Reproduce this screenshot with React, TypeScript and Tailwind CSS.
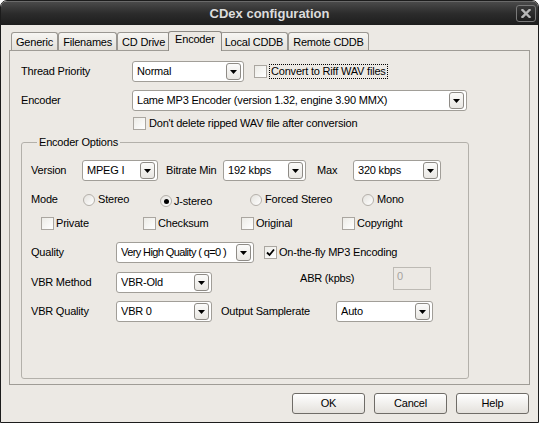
import React from 'react';

const font = { fontFamily: '"Liberation Sans", Arial, sans-serif' };

function Arrow() {
  return (
    <span className="w-[15px] h-[17px] mr-[2px] shrink-0 rounded-[3px] border border-[#8e8b86] bg-gradient-to-b from-[#fbfbfa] to-[#e9e7e3] flex items-center justify-center">
      <svg width="7" height="4" viewBox="0 0 7 4">
        <path d="M0 0h7L3.5 4z" fill="#000" />
      </svg>
    </span>
  );
}

function Select({ w, value, tight = false }: { w: string; value: string; tight?: boolean }) {
  return (
    <div className={`${w} h-[21px] shrink-0 rounded-[3px] border border-[#a19e98] bg-white flex items-center pl-[4px]`}>
      <span className={`flex-1 overflow-hidden whitespace-nowrap ${tight ? 'tracking-[-0.6px]' : ''}`}>{value}</span>
      <Arrow />
    </div>
  );
}

function Check({ checked = false }: { checked?: boolean }) {
  return (
    <span className="w-[13px] h-[13px] shrink-0 border border-[#aaa6a0] bg-gradient-to-br from-[#ecebe6] to-white flex items-center justify-center">
      {checked && (
        <svg width="9" height="9" viewBox="0 0 9 9">
          <path d="M1 4.5l2.5 2.5L8 1.5" stroke="#000" strokeWidth="1.8" fill="none" />
        </svg>
      )}
    </span>
  );
}

function Radio({ checked = false }: { checked?: boolean }) {
  return (
    <span className="w-[12px] h-[12px] shrink-0 rounded-full border border-[#b4b0aa] bg-gradient-to-br from-[#e4e2dd] to-white flex items-center justify-center">
      {checked && <span className="w-[5px] h-[5px] rounded-full bg-black" />}
    </span>
  );
}

function Tab({ label, active = false }: { label: string; active?: boolean }) {
  if (active) {
    return (
      <div className="relative z-10 -mx-[2px] -mb-px h-[20px] px-[6px] pt-[1px] border border-b-0 border-[#8d8a85] rounded-t-[3px] bg-[#ece9e4] flex items-start">
        {label}
      </div>
    );
  }
  return (
    <div className="h-[18px] px-[4px] pt-[3px] border border-b-0 border-[#9a9792] rounded-t-[3px] bg-gradient-to-b from-[#f7f6f3] to-[#e3e0da] flex items-start">
      {label}
    </div>
  );
}

function Button({ label }: { label: string }) {
  return (
    <div className="w-[73px] h-[21px] rounded-[3px] border border-[#6f6c67] bg-gradient-to-b from-white to-[#e4e1dc] flex items-center justify-center">
      {label}
    </div>
  );
}

export default function App() {
  return (
    <div className="w-[539px] h-[423px] bg-white text-[11px] tracking-[-0.2px] text-black leading-[13px]" style={font}>
      <div className="h-full flex flex-col rounded-t-[7px] overflow-hidden border border-[#1c1c1c] bg-[#ece9e4]">
        {/* title bar */}
        <div className="h-[24px] shrink-0 grid grid-cols-[1fr_auto_1fr] items-center bg-gradient-to-b from-[#4a4a4a] via-[#2c2c2c] to-[#1d1d1d] border-t border-[#6a6a6a]">
          <div />
          <div className="text-[13px] font-bold tracking-normal text-[#dcdcdc]">CDex configuration</div>
          <div className="flex justify-end pr-[2px]">
            <div className="w-[20px] h-[17px] rounded-[3px] border border-[#7a7a7a] bg-gradient-to-b from-[#3a3a3a] to-[#1e1e1e] flex items-center justify-center">
              <svg width="10" height="9" viewBox="0 0 10 9">
                <path d="M1.5 1l7 7M8.5 1l-7 7" stroke="#b8b8b8" strokeWidth="2.4" strokeLinecap="square" />
              </svg>
            </div>
          </div>
        </div>

        {/* body */}
        <div className="flex-1 flex flex-col pt-[5px]">
          <div className="h-[20px] flex items-end pl-[10px]">
            <Tab label="Generic" />
            <Tab label="Filenames" />
            <Tab label="CD Drive" />
            <Tab label="Encoder" active />
            <Tab label="Local CDDB" />
            <Tab label="Remote CDDB" />
          </div>

          <div className="ml-[8px] w-[521px] h-[335px] border border-[#9f9c96] bg-[#ece9e4] pl-[11px] pt-[10px]">
            <div className="h-[21px] flex items-center">
              <span className="w-[111px] shrink-0">Thread Priority</span>
              <Select w="w-[112px]" value="Normal" />
              <span className="ml-[10px]"><Check /></span>
              <span className="ml-[2px] px-[1px] border border-dotted border-black">Convert to Riff WAV files</span>
            </div>

            <div className="mt-[8px] h-[21px] flex items-center">
              <span className="w-[111px] shrink-0">Encoder</span>
              <Select w="w-[335px]" value="Lame MP3 Encoder (version 1.32, engine 3.90 MMX)" />
            </div>

            <div className="mt-[6px] h-[13px] flex items-center pl-[112px] gap-[3px]">
              <Check />
              <span>Don't delete ripped WAV file after conversion</span>
            </div>

            <fieldset className="mt-[6px] w-[448px] h-[243px] border border-[#b3b0aa] rounded-[3px] pl-[9px]">
              <legend className="ml-[6px] px-[2px]">Encoder Options</legend>

              <div className="mt-[11px] h-[21px] flex items-center">
                <span className="w-[51px] shrink-0">Version</span>
                <Select w="w-[76px]" value="MPEG I" />
                <span className="ml-[8px] w-[57px] shrink-0">Bitrate Min</span>
                <Select w="w-[83px]" value="192 kbps" />
                <span className="ml-[11px] w-[36px] shrink-0">Max</span>
                <Select w="w-[88px]" value="320 kbps" />
              </div>

              <div className="mt-[12px] h-[13px] flex items-center">
                <span className="w-[52px] shrink-0">Mode</span>
                <span className="w-[77px] shrink-0 flex items-center gap-[3px]"><Radio /><span>Stereo</span></span>
                <span className="w-[90px] shrink-0 flex items-center gap-[2px] mt-[3px]"><Radio checked /><span>J-stereo</span></span>
                <span className="w-[112px] shrink-0 flex items-center gap-[3px]"><Radio /><span>Forced Stereo</span></span>
                <span className="flex items-center gap-[3px]"><Radio /><span>Mono</span></span>
              </div>

              <div className="mt-[11px] h-[13px] flex items-center pl-[10px]">
                <span className="w-[102px] shrink-0 flex items-center gap-[2px]"><Check /><span>Private</span></span>
                <span className="w-[98px] shrink-0 flex items-center gap-[2px]"><Check /><span>Checksum</span></span>
                <span className="w-[101px] shrink-0 flex items-center gap-[2px]"><Check /><span>Original</span></span>
                <span className="flex items-center gap-[2px]"><Check /><span>Copyright</span></span>
              </div>

              <div className="mt-[12px] h-[21px] flex items-center">
                <span className="w-[85px] shrink-0">Quality</span>
                <Select w="w-[138px]" value="Very High Quality ( q=0 )" tight />
                <span className="ml-[10px]"><Check checked /></span>
                <span className="ml-[2px]">On-the-fly MP3 Encoding</span>
              </div>

              <div className="mt-[9px] h-[21px] flex items-center">
                <span className="w-[85px] shrink-0">VBR Method</span>
                <Select w="w-[96px]" value="VBR-Old" />
                <div className="ml-[88px] mb-[8px] flex items-center">
                  <span className="w-[93px] shrink-0">ABR (kpbs)</span>
                  <div className="w-[38px] h-[23px] border border-[#bdbab4] bg-[#ece9e4] pl-[3px] pt-[2px] text-[#a6a39e]">0</div>
                </div>
              </div>

              <div className="mt-[8px] h-[21px] flex items-center">
                <span className="w-[85px] shrink-0">VBR Quality</span>
                <Select w="w-[96px]" value="VBR 0" />
                <span className="ml-[9px] w-[115px] shrink-0">Output Samplerate</span>
                <Select w="w-[97px]" value="Auto" />
              </div>
            </fieldset>
          </div>

          <div className="mt-[8px] flex justify-end gap-[9px] pr-[9px]">
            <Button label="OK" />
            <Button label="Cancel" />
            <Button label="Help" />
          </div>
        </div>
      </div>
    </div>
  );
}
